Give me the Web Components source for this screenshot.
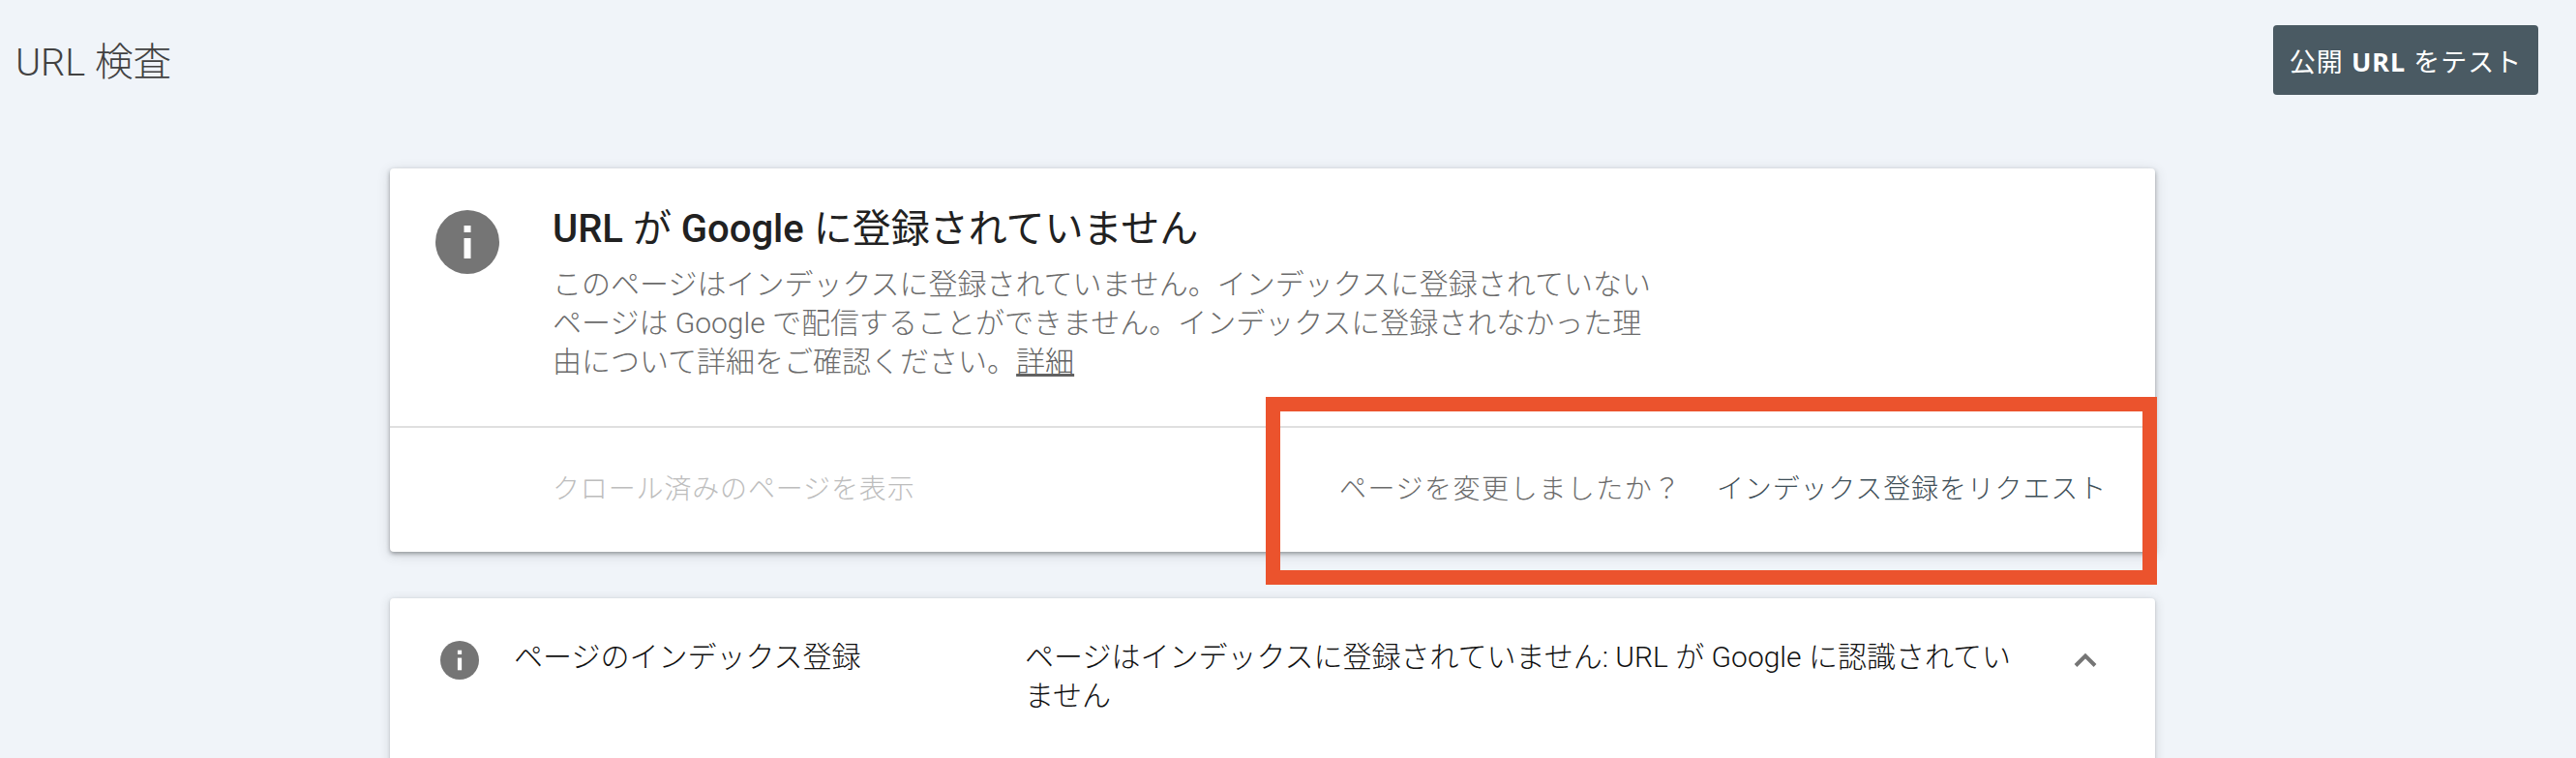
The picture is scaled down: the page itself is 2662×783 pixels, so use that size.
<!DOCTYPE html>
<html lang="ja">
<head>
<meta charset="utf-8">
<title>URL 検査</title>
<style>
html,body{margin:0;padding:0;height:783px;overflow:hidden;background:#f0f4f9;font-family:Roboto,"Noto Sans CJK JP",sans-serif;}
status-card b{font-weight:500;}
status-card .ln{display:block;white-space:nowrap;}
status-card a{color:#616161;text-decoration:underline;}
page-header b{font-weight:700;}
</style>
</head>
<body>
<inspect-page>
  <page-header slot="header" heading="URL 検査"><span>公開 <b>URL</b> をテスト</span></page-header>
  <status-card slot="main"><span slot="title"><b>URL</b> が <b>Google</b> に登録されていません</span><span class="ln">このページはインデックスに登録されていません。インデックスに登録されていない</span><span class="ln">ページは Google で配信することができません。インデックスに登録されなかった理</span><span class="ln"><span>由について詳細をご確認ください。</span><a href="#">詳細</a></span><span slot="left">クロール済みのページを表示</span><span slot="note">ページを変更しましたか？</span><span slot="action">インデックス登録をリクエスト</span></status-card>
  <coverage-row slot="main"><span slot="label">ページのインデックス登録</span>ページはインデックスに登録されていません: URL が Google に認識されていません</coverage-row>
  <highlight-box slot="overlay"></highlight-box>
</inspect-page>
<script>
const FONT='font-family:Roboto,"Noto Sans CJK JP",sans-serif;';
const INFO=`<svg viewBox="0 0 66 66" width="100%" height="100%" aria-hidden="true"><circle cx="33" cy="33" r="33" fill="#757575"/><rect x="29.5" y="16" width="7" height="7" fill="#fff"/><rect x="29.5" y="29" width="7" height="21" fill="#fff"/></svg>`;
function def(name,html){
  customElements.define(name,class extends HTMLElement{
    constructor(){super();this.attachShadow({mode:'open'}).innerHTML=html(this);}
  });
}
def('inspect-page',()=>`<style>
:host{display:block;position:relative;height:783px;overflow:hidden;}
main{width:1824px;margin:76px auto 0;display:flex;flex-direction:column;gap:48px;}
.wrap{width:2630px;}
</style>
<slot name="header"></slot>
<div class="wrap"><main><slot name="main"></slot></main></div>
<slot name="overlay"></slot>`);
def('page-header',el=>`<style>
:host{display:flex;justify-content:space-between;align-items:flex-start;padding:26px 39px 0 16px;height:72px;${FONT}}
h1{margin:0;font-size:39.7px;font-weight:300;line-height:52px;color:#424242;margin-top:13px;}
button{all:unset;box-sizing:border-box;width:274px;height:72px;background:#4a5a63;border-radius:4px;color:#fff;
 display:flex;align-items:center;justify-content:center;font:400 27px "Noto Sans","Noto Sans CJK JP",sans-serif;letter-spacing:1px;}
::slotted(span){white-space:nowrap;}
</style>
<h1>${el.getAttribute('heading')}</h1>
<button><slot></slot></button>`);
def('status-card',()=>`<style>
:host{display:block;background:#fff;border-radius:4px;height:396px;box-shadow:0 2px 4px rgba(60,64,67,.45),0 3px 12px 2px rgba(60,64,67,.13);${FONT}}
.top{display:flex;height:266px;box-sizing:border-box;padding:43px 0 0 47px;}
.ic{width:66px;height:66px;flex:none;margin-right:55px;}
.txt{margin-top:-6px;}
h2{margin:0;font-size:40px;font-weight:400;line-height:52px;color:#212121;}
.desc{margin:11px 0 0;width:1140px;font-size:30px;font-weight:300;line-height:40px;color:#6b6b6b;}
.div{height:2px;background:#e0e0e0;}
.act{height:122px;padding-bottom:6px;display:flex;align-items:center;padding-left:168px;padding-right:50px;font-size:28px;font-weight:300;letter-spacing:.85px;white-space:nowrap;}
.left{color:#bdbdbd;flex:1;}
.note{color:#6b6b6b;margin-right:36px;letter-spacing:1.55px;}
.action{color:#3f4f58;}
</style>
<div class="top"><div class="ic">${INFO}</div><div class="txt"><h2><slot name="title"></slot></h2><div class="desc"><slot></slot></div></div></div>
<div class="div"></div>
<div class="act"><span class="left"><slot name="left"></slot></span><span class="note"><slot name="note"></slot></span><span class="action"><slot name="action"></slot></span></div>`);
def('coverage-row',()=>`<style>
:host{display:flex;align-items:flex-start;background:#fff;border-radius:4px;height:300px;box-sizing:border-box;padding:44px 0 0 52px;box-shadow:0 1px 3px rgba(60,64,67,.25),0 2px 10px 2px rgba(60,64,67,.12);${FONT}font-size:30px;font-weight:300;line-height:40px;color:#111;}
.ic{width:40px;height:40px;flex:none;margin-right:36px;}
.label,.val{margin-top:-3px;}
.label{width:528px;flex:none;}
.val{width:1030px;flex:none;}
svg.chev{flex:none;width:24px;height:15px;margin:12px 0 0 54px;}
</style>
<div class="ic">${INFO}</div>
<div class="label"><slot name="label"></slot></div>
<div class="val"><slot></slot></div>
<svg class="chev" viewBox="0 0 24 15"><path d="M2 13.5 12 3.5 22 13.5" fill="none" stroke="#757575" stroke-width="4"/></svg>`);
def('highlight-box',()=>`<style>
:host{display:block;position:absolute;left:1308px;top:410px;width:921px;height:194px;box-sizing:border-box;border:15px solid #eb532d;pointer-events:none;}
</style>`);
</script>
</body>
</html>
